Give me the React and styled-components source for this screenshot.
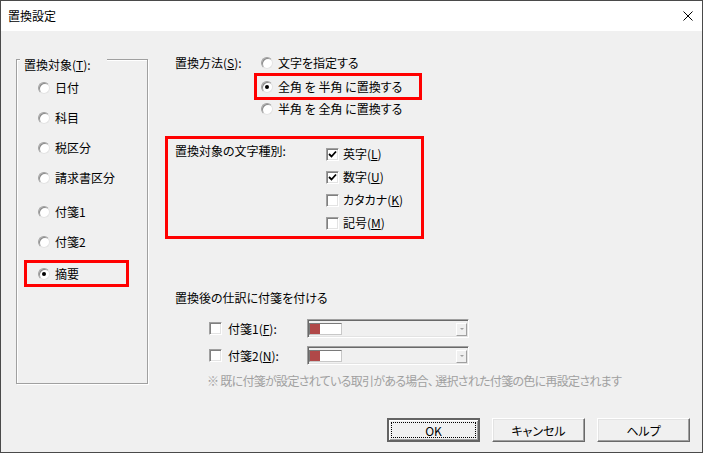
import styled, { createGlobalStyle, css } from "styled-components";

const Global = createGlobalStyle`
  html, body { margin: 0; padding: 0; background: #fff; }
  body {
    font-family: "Noto Sans CJK JP", "Noto Sans", sans-serif;
    font-size: 12px;
    color: #000;
    font-feature-settings: "palt";
  }
`;

const Window = styled.div`
  width: 703px;
  height: 453px;
  box-sizing: border-box;
  border: 1px solid #4a4a4a;
  display: flex;
  flex-direction: column;
  background: #f0f0f0;
  overflow: hidden;
`;

const TitleBar = styled.div`
  height: 30px;
  flex: none;
  background: #fff;
  display: flex;
  align-items: center;
  justify-content: space-between;
  padding: 0 9px 0 7px;
  line-height: 14px;
`;

const Main = styled.div`
  height: 387px;
  flex: none;
  display: flex;
  align-items: flex-start;
  padding-left: 15px;
`;

const GroupBox = styled.div`
  position: relative;
  margin-top: 28px;
  width: 132px;
  height: 325px;
  box-sizing: border-box;
  border: 1px solid #a0a0a0;
  box-shadow: inset 1px 1px 0 #fff, 1px 1px 0 #fff;
  padding-top: 16px;
  display: flex;
  flex-direction: column;
`;

const Legend = styled.div`
  position: absolute;
  top: -2px;
  left: 3px;
  width: 83px;
  padding-left: 4px;
  background: #f0f0f0;
  line-height: 14px;
`;

const Option = styled.div`
  display: flex;
  align-items: center;
  gap: 5px;
  box-sizing: border-box;
  height: ${(p) => p.$h || 24}px;
  margin-top: ${(p) => p.$mt || 0}px;
  line-height: 14px;
  ${(p) =>
    p.$boxed &&
    css`
      border: 3px solid #ff0000;
      padding-left: ${p.$pad}px;
      width: ${p.$w}px;
    `}
`;

const Radio = styled.span`
  width: 12px;
  height: 12px;
  flex: none;
  box-sizing: border-box;
  border-radius: 50%;
  background: #fff;
  border: 1px solid;
  border-color: #a0a0a0 #e3e3e3 #e3e3e3 #a0a0a0;
  box-shadow: inset 1px 1px 0 #8a8a8a;
  display: flex;
  align-items: center;
  justify-content: center;
  &::after {
    content: "";
    width: 4px;
    height: 4px;
    border-radius: 50%;
    background: #000;
    display: ${(p) => (p.$checked ? "block" : "none")};
  }
`;

const LeftList = styled.div`
  display: flex;
  flex-direction: column;
  margin-left: 21px;
`;

const Right = styled.div`
  margin-left: 17px;
  margin-top: 22px;
  display: flex;
  flex-direction: column;
`;

const MethodRow = styled.div`
  display: flex;
  margin-left: 10px;
`;

const Label = styled.div`
  width: ${(p) => p.$w}px;
  flex: none;
  line-height: 14px;
  margin-top: ${(p) => p.$mt || 0}px;
`;

const Column = styled.div`
  display: flex;
  flex-direction: column;
  gap: ${(p) => p.$gap || 0}px;
`;

const RedBox = styled.div`
  margin-top: 18px;
  width: 259px;
  height: 103px;
  box-sizing: border-box;
  border: 3px solid #ff0000;
  padding: 4px 0 0 7px;
  display: flex;
`;

const CheckRow = styled.div`
  display: flex;
  align-items: center;
  gap: 4px;
  height: 22px;
  line-height: 14px;
`;

const CheckBox = styled.span`
  width: 13px;
  height: 13px;
  flex: none;
  box-sizing: border-box;
  background: #fff;
  border: 1px solid;
  border-color: #a0a0a0 #fff #fff #a0a0a0;
  box-shadow: inset 1px 1px 0 #808080, inset -1px -1px 0 #e3e3e3;
  display: flex;
  align-items: center;
  justify-content: center;
`;

const SubTitle = styled.div`
  margin: 52px 0 0 10px;
  line-height: 14px;
`;

const TagRow = styled.div`
  display: flex;
  align-items: center;
  height: 19px;
  margin: ${(p) => p.$mt}px 0 0 44px;
  line-height: 14px;
`;

const TagLabel = styled.span`
  width: 79px;
  margin-left: 6px;
`;

const Combo = styled.div`
  width: 162px;
  height: 19px;
  box-sizing: border-box;
  border: 1px solid;
  border-color: #a0a0a0 #fff #fff #a0a0a0;
  box-shadow: inset 1px 1px 0 #696969, inset -1px -1px 0 #e3e3e3;
  display: flex;
  align-items: center;
  padding: 0 1px 0 1px;
`;

const Swatch = styled.div`
  width: 33px;
  height: 12px;
  box-sizing: border-box;
  border: 1px solid;
  border-color: #7a7a7a #c8c8c8 #c8c8c8 #7a7a7a;
  background: linear-gradient(to right, ${(p) => p.$color} 0 10px, #fff 10px);
`;

const DropBtn = styled.div`
  margin-left: auto;
  margin-top: 1px;
  width: 11px;
  height: 13px;
  box-sizing: border-box;
  border: 1px solid;
  border-color: #fff #a0a0a0 #a0a0a0 #fff;
  display: flex;
  align-items: center;
  justify-content: center;
  &::after {
    content: "";
    border-left: 2px solid transparent;
    border-right: 2px solid transparent;
    border-top: 2px solid #a0a0a0;
  }
`;

const Note = styled.div`
  margin: 9px 0 0 42px;
  color: #a0a0a0;
  line-height: 14px;
  white-space: nowrap;
  letter-spacing: -0.7px;
`;

const Footer = styled.div`
  display: flex;
  justify-content: flex-end;
  gap: 12px;
  padding-right: 12px;
`;

const Button = styled.button`
  position: relative;
  width: 93px;
  height: 24px;
  box-sizing: border-box;
  padding: 0;
  font: inherit;
  color: #000;
  background: #f0f0f0;
  border: 1px solid;
  border-color: #fff #696969 #696969 #fff;
  box-shadow: inset -1px -1px 0 #a0a0a0, inset 1px 1px 0 #e3e3e3;
  ${(p) =>
    p.$default &&
    css`
      border: 2px solid #646464;
      box-shadow: inset 1px 1px 0 #fff, inset -1px -1px 0 #a0a0a0;
      &::after {
        content: "";
        position: absolute;
        inset: 2px;
        border: 1px dotted #000;
      }
    `}
`;

function Check({ on }) {
  return (
    <CheckBox>
      {on && (
        <svg width="9" height="9" viewBox="0 0 9 9">
          <polyline points="1,4 3.5,6.5 8,1.5" fill="none" stroke="#000" strokeWidth="1.8" />
        </svg>
      )}
    </CheckBox>
  );
}

const targets = [
  { t: "日付" },
  { t: "科目", mt: 6 },
  { t: "税区分", mt: 6 },
  { t: "請求書区分", mt: 6 },
  { t: "付箋1", mt: 10 },
  { t: "付箋2", mt: 6 },
];

const kinds = [
  { t: "英字", k: "L", on: true },
  { t: "数字", k: "U", on: true },
  { t: "カタカナ", k: "K" },
  { t: "記号", k: "M" },
];

export default function App() {
  return (
    <>
      <Global />
      <Window>
        <TitleBar>
          <span>置換設定</span>
          <svg width="10" height="10" viewBox="0 0 10 10">
            <path d="M0.5 0.5 L9.5 9.5 M9.5 0.5 L0.5 9.5" stroke="#000" strokeWidth="1" />
          </svg>
        </TitleBar>
        <Main>
          <GroupBox>
            <Legend>
              置換対象(<u>T</u>):
            </Legend>
            <LeftList>
              {targets.map((o) => (
                <Option key={o.t} $mt={o.mt}>
                  <Radio />
                  {o.t}
                </Option>
              ))}
            </LeftList>
            <Option $boxed $h={27} $w={105} $pad={11} $mt={6} style={{ marginLeft: 7 }}>
              <Radio $checked />
              摘要
            </Option>
          </GroupBox>
          <Right>
            <MethodRow>
              <Label $w={86} $mt={3}>
                置換方法(<u>S</u>):
              </Label>
              <Column>
                <Option $h={20}>
                  <Radio />
                  文字を指定する
                </Option>
                <Option $boxed $h={27} $w={168} $pad={4} style={{ marginLeft: -7 }}>
                  <Radio $checked />
                  全角 を 半角 に置換する
                </Option>
                <Option $h={18}>
                  <Radio />
                  半角 を 全角 に置換する
                </Option>
              </Column>
            </MethodRow>
            <RedBox>
              <Label $w={151} $mt={1}>
                置換対象の文字種別:
              </Label>
              <Column $gap={1}>
                {kinds.map((k) => (
                  <CheckRow key={k.k}>
                    <Check on={k.on} />
                    <span>
                      {k.t}(<u>{k.k}</u>)
                    </span>
                  </CheckRow>
                ))}
              </Column>
            </RedBox>
            <SubTitle>置換後の仕訳に付箋を付ける</SubTitle>
            <TagRow $mt={14}>
              <Check />
              <TagLabel>
                付箋1(<u>F</u>):
              </TagLabel>
              <Combo>
                <Swatch $color="#b04848" />
                <DropBtn />
              </Combo>
            </TagRow>
            <TagRow $mt={8}>
              <Check />
              <TagLabel>
                付箋2(<u>N</u>):
              </TagLabel>
              <Combo>
                <Swatch $color="#b04848" />
                <DropBtn />
              </Combo>
            </TagRow>
            <Note>※ 既に付箋が設定されている取引がある場合、 選択された付箋の色に再設定されます</Note>
          </Right>
        </Main>
        <Footer>
          <Button $default>OK</Button>
          <Button>キャンセル</Button>
          <Button>ヘルプ</Button>
        </Footer>
      </Window>
    </>
  );
}
